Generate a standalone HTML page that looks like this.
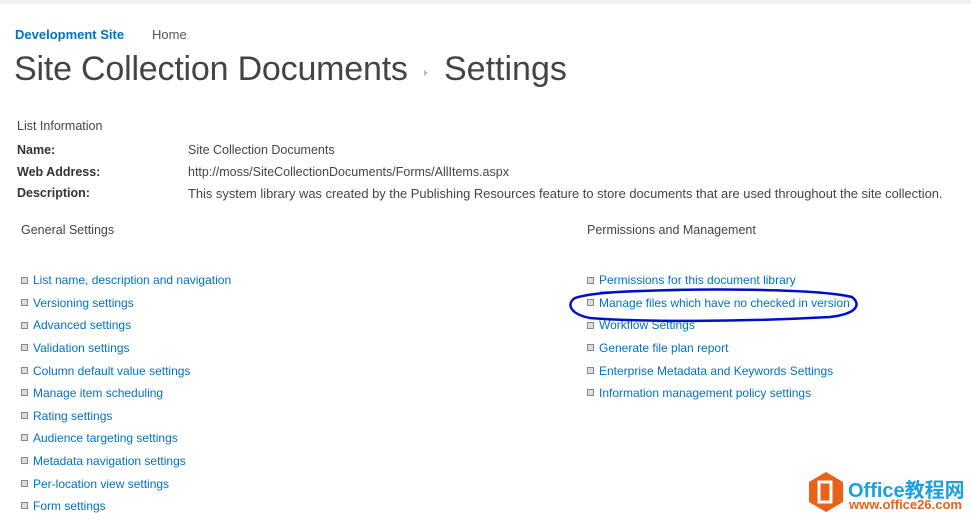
<!DOCTYPE html>
<html><head><meta charset="utf-8"><style>
body{margin:0;width:971px;height:521px;background:#fff;font-family:"Liberation Sans",sans-serif;position:relative;overflow:hidden;color:#444}
.a{position:absolute;white-space:nowrap}
.t{font-size:12.5px;color:#444}
.b{font-weight:bold;color:#333;font-size:12.5px}
.l{font-size:12px;color:#0072c6}
.sq{position:absolute;width:5px;height:5px;border:1px solid #888;background:#ddd}
</style></head><body>
<div class="a" style="left:0;top:0;width:971px;height:4px;background:#f0f0f0"></div>
<div class="a" style="left:15px;top:27px;font-size:13px;font-weight:bold;color:#0072c6">Development Site</div>
<div class="a" style="left:152px;top:27px;font-size:13px;color:#555">Home</div>
<div class="a" style="left:14px;top:50px;font-size:34px;color:#444;letter-spacing:-0.2px">Site Collection Documents</div>
<div class="a" style="left:424px;top:70px;width:0;height:0;border-left:4px solid #bbb;border-top:3px solid transparent;border-bottom:3px solid transparent"></div>
<div class="a" style="left:444px;top:50px;font-size:34px;color:#444">Settings</div>
<div class="a t" style="left:17px;top:119px">List Information</div>
<div class="a b" style="left:17px;top:143px">Name:</div>
<div class="a b" style="left:17px;top:165px">Web Address:</div>
<div class="a b" style="left:17px;top:186px">Description:</div>
<div class="a t" style="left:188px;top:143px">Site Collection Documents</div>
<div class="a t" style="left:188px;top:165px">http://moss/SiteCollectionDocuments/Forms/AllItems.aspx</div>
<div class="a t" style="left:188px;top:186px;font-size:12.9px">This system library was created by the Publishing Resources feature to store documents that are used throughout the site collection.</div>
<div class="a t" style="left:21px;top:223px">General Settings</div>
<div class="a t" style="left:587px;top:223px">Permissions and Management</div>

<div class="sq" style="left:21px;top:277px"></div><div class="a l" style="left:33px;top:273px">List name, description and navigation</div>
<div class="sq" style="left:21px;top:299px"></div><div class="a l" style="left:33px;top:296px">Versioning settings</div>
<div class="sq" style="left:21px;top:322px"></div><div class="a l" style="left:33px;top:318px">Advanced settings</div>
<div class="sq" style="left:21px;top:344px"></div><div class="a l" style="left:33px;top:341px">Validation settings</div>
<div class="sq" style="left:21px;top:367px"></div><div class="a l" style="left:33px;top:364px">Column default value settings</div>
<div class="sq" style="left:21px;top:389px"></div><div class="a l" style="left:33px;top:386px">Manage item scheduling</div>
<div class="sq" style="left:21px;top:412px"></div><div class="a l" style="left:33px;top:409px">Rating settings</div>
<div class="sq" style="left:21px;top:434px"></div><div class="a l" style="left:33px;top:431px">Audience targeting settings</div>
<div class="sq" style="left:21px;top:457px"></div><div class="a l" style="left:33px;top:454px">Metadata navigation settings</div>
<div class="sq" style="left:21px;top:480px"></div><div class="a l" style="left:33px;top:477px">Per-location view settings</div>
<div class="sq" style="left:21px;top:502px"></div><div class="a l" style="left:33px;top:499px">Form settings</div>

<div class="sq" style="left:587px;top:277px"></div><div class="a l" style="left:599px;top:273px">Permissions for this document library</div>
<div class="sq" style="left:587px;top:299px"></div><div class="a l" style="left:599px;top:296px">Manage files which have no checked in version</div>
<div class="sq" style="left:587px;top:322px"></div><div class="a l" style="left:599px;top:318px">Workflow Settings</div>
<div class="sq" style="left:587px;top:344px"></div><div class="a l" style="left:599px;top:341px">Generate file plan report</div>
<div class="sq" style="left:587px;top:367px"></div><div class="a l" style="left:599px;top:364px">Enterprise Metadata and Keywords Settings</div>
<div class="sq" style="left:587px;top:389px"></div><div class="a l" style="left:599px;top:386px">Information management policy settings</div>

<svg class="a" style="left:0;top:0" width="971" height="521">
<path d="M600 293 C700 287 820 289 852 297 C862 305 856 314 830 317 C740 322 640 322 590 318 C570 314 566 304 575 298 C590 293 620 291 680 290" fill="none" stroke="#0010c8" stroke-width="2.5"/>
<polygon points="826,472 843,482 843,502 826,512 809,502 809,482" fill="#e8621a"/>
<rect x="819" y="482" width="12" height="20" fill="none" stroke="#fff" stroke-width="3"/>
</svg>
<div class="a" style="left:848px;top:474px;font-size:20px;font-weight:bold;color:#1ea0e0;font-family:'Liberation Sans','Noto Sans CJK SC',sans-serif">Office教程网</div>
<div class="a" style="left:849px;top:497px;font-size:13px;font-weight:bold;color:#e8621a">www.office26.com</div>
</body></html>
